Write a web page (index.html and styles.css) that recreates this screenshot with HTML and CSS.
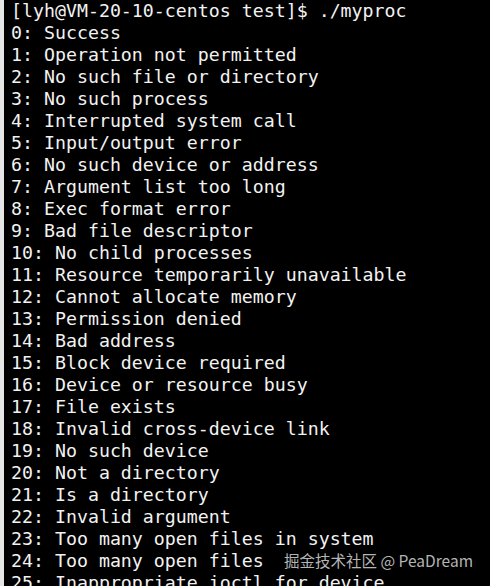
FILE: index.html
```html
<!DOCTYPE html>
<html>
<head>
<meta charset="utf-8">
<link rel="stylesheet" href="styles.css">
</head>
<body>
<div class="term">
<div class="edge"></div>
<div class="screen">
<div class="line">[lyh@VM-20-10-centos test]$ ./myproc</div>
<div class="line">0: Success</div>
<div class="line">1: Operation not permitted</div>
<div class="line">2: No such file or directory</div>
<div class="line">3: No such process</div>
<div class="line">4: Interrupted system call</div>
<div class="line">5: Input/output error</div>
<div class="line">6: No such device or address</div>
<div class="line">7: Argument list too long</div>
<div class="line">8: Exec format error</div>
<div class="line">9: Bad file descriptor</div>
<div class="line">10: No child processes</div>
<div class="line">11: Resource temporarily unavailable</div>
<div class="line">12: Cannot allocate memory</div>
<div class="line">13: Permission denied</div>
<div class="line">14: Bad address</div>
<div class="line">15: Block device required</div>
<div class="line">16: Device or resource busy</div>
<div class="line">17: File exists</div>
<div class="line">18: Invalid cross-device link</div>
<div class="line">19: No such device</div>
<div class="line">20: Not a directory</div>
<div class="line">21: Is a directory</div>
<div class="line">22: Invalid argument</div>
<div class="line">23: Too many open files in system</div>
<div class="line">24: Too many open files</div>
<div class="line">25: Inappropriate ioctl for device</div>
</div>
<div class="watermark">掘金技术社区 @ PeaDream</div>
</div>
</body>
</html>
```
FILE: styles.css
```css
html, body {
  margin: 0;
  padding: 0;
  background: #000;
}
.term {
  position: relative;
  width: 490px;
  height: 586px;
  overflow: hidden;
  display: flex;
  background: #000;
}
.edge {
  width: 4px;
  flex: none;
  background: #e6e6e6;
}
.screen {
  flex: 1;
  padding-left: 7px;
  font-family: "DejaVu Sans Mono", monospace;
  font-size: 18.25px;
  line-height: 22px;
  color: #f2f2f2;
}
.line {
  white-space: pre;
  height: 22px;
}
.watermark {
  position: absolute;
  left: 284px;
  top: 550px;
  font-family: "Noto Sans CJK SC", "Noto Sans", sans-serif;
  font-size: 15.5px;
  line-height: 20px;
  color: #b4b4b4;
  white-space: nowrap;
}
```
